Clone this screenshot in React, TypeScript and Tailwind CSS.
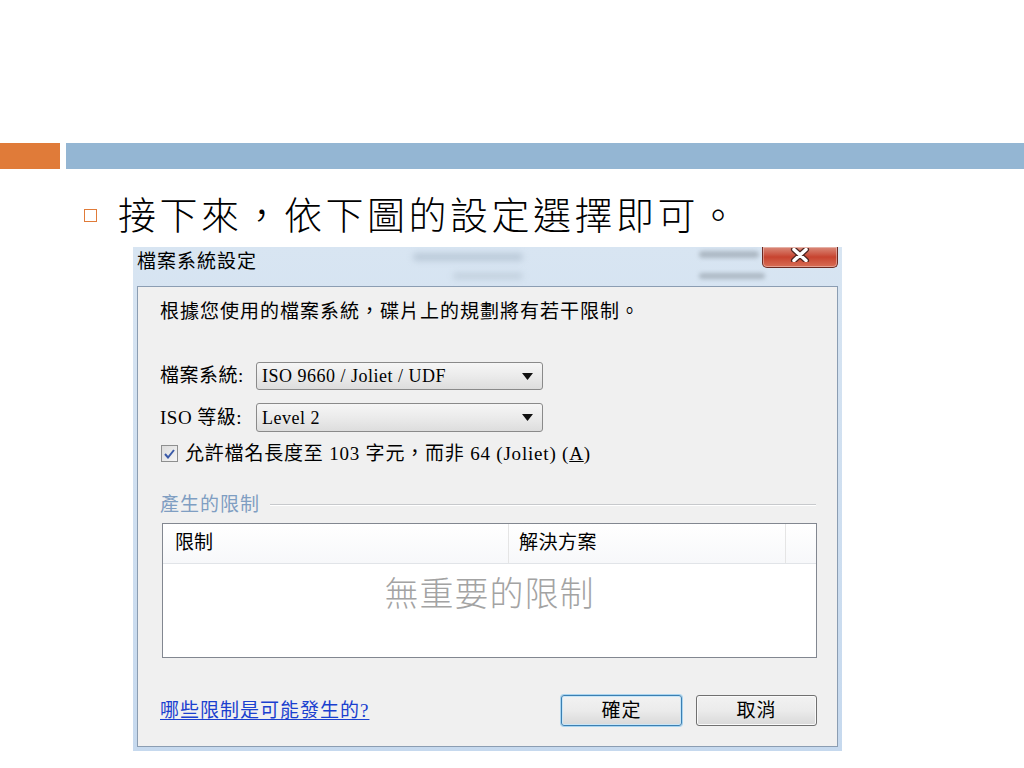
import React from "react";

const dlgFont = "font-['Liberation_Serif','Noto_Sans_CJK_TC',serif]";

function DropDown({ value }: { value: string }) {
  return (
    <div className="flex items-center justify-between w-[287px] h-full px-[5px] border border-[#8a8a8a] rounded-[3px] bg-gradient-to-b from-[#f6f6f6] via-[#ebebeb] to-[#dddddd]">
      <span className="text-[18px] leading-[22px] tracking-[0.5px] text-black">{value}</span>
      <svg width="11" height="7" viewBox="0 0 11 7" className="mr-[4px]">
        <path d="M0 0 L11 0 L5.5 7 Z" fill="#111" />
      </svg>
    </div>
  );
}

function CloseButton() {
  return (
    <div className="flex items-center justify-center w-[76px] h-[21px] mr-[4px] rounded-b-[5px] border border-t-0 border-[#6b2a22] bg-gradient-to-b from-[#d9897a] via-[#c7432f] to-[#d86d55] shadow-[inset_0_0_0_1px_rgba(255,255,255,0.35)]">
      <svg width="20" height="14" viewBox="0 0 20 14" className="-mt-[4px]">
        <path d="M4 1.5 L16 12.5 M16 1.5 L4 12.5" stroke="#4f2520" strokeWidth="6" strokeLinecap="round" />
        <path d="M4 1.5 L16 12.5 M16 1.5 L4 12.5" stroke="#ffffff" strokeWidth="3.5" strokeLinecap="round" />
      </svg>
    </div>
  );
}

function DialogButton({ label, focused }: { label: string; focused?: boolean }) {
  return (
    <div
      className={
        focused
          ? "flex items-center justify-center w-[121px] h-[31px] rounded-[3px] border border-[#3c7fb1] shadow-[0_0_0_1px_#a8d4f0,inset_0_0_0_1px_#c8e6f8] bg-gradient-to-b from-[#f2f2f2] via-[#ebebeb] to-[#d9d9d9]"
          : "flex items-center justify-center w-[121px] h-[31px] rounded-[3px] border border-[#707070] shadow-[inset_0_0_0_1px_#fafafa] bg-gradient-to-b from-[#f2f2f2] via-[#ebebeb] to-[#d9d9d9]"
      }
    >
      <span className="text-[19px] leading-[22px] tracking-[1px] text-black">{label}</span>
    </div>
  );
}

export default function App() {
  return (
    <div className="relative w-[1024px] h-[768px] overflow-hidden bg-white">
      <div className="h-[143px]" />
      <div className="flex h-[26px] gap-[6px]">
        <div className="w-[60px] bg-[#e07b39]" />
        <div className="flex-1 bg-[#94b6d3]" />
      </div>

      <div className="flex items-center h-[48px] mt-[20px] pl-[84px]">
        <div className="w-[13px] h-[13px] border border-[#e07b39] mt-[4px]" />
        <span className="ml-[21px] text-[38px] leading-[48px] tracking-[3.5px] text-black font-light font-['Noto_Sans_CJK_TC',serif]">
          接下來，依下圖的設定選擇即可。
        </span>
      </div>

      <div
        className={`relative flex flex-col ml-[133px] mt-[10px] w-[709px] h-[504px] bg-gradient-to-b from-[#d8e5f2] to-[#c6d9ee] ${dlgFont}`}
      >
        {/* title bar */}
        <div className="relative flex items-start justify-between h-[39px] pl-[4px] pt-[4px] overflow-hidden">
          <div className="absolute left-[280px] top-[6px] w-[110px] h-[8px] rounded-full bg-[#9fb0c0] opacity-50 blur-[3px]" />
          <div className="absolute left-[320px] top-[26px] w-[70px] h-[6px] rounded-full bg-[#a9b8c6] opacity-50 blur-[3px]" />
          <div className="absolute left-[566px] top-[4px] w-[60px] h-[7px] rounded-full bg-[#8f9aa4] opacity-60 blur-[2px]" />
          <div className="absolute left-[566px] top-[26px] w-[66px] h-[6px] rounded-full bg-[#8f9aa4] opacity-60 blur-[2px]" />
          <span className="relative text-[19px] leading-[22px] tracking-[1px] text-black">檔案系統設定</span>
          <div className="relative -mt-[4px]">
            <CloseButton />
          </div>
        </div>

        {/* client area */}
        <div className="flex flex-col flex-1 mx-[4px] mb-[4px] pl-[22px] pr-[20px] border border-[#8b9db2] bg-[#f0f0f0] text-[19px] text-black">
          <div className="mt-[13px] leading-[24px] tracking-[1px]">根據您使用的檔案系統，碟片上的規劃將有若干限制。</div>

          <div className="flex items-center h-[28px] mt-[38px]">
            <span className="w-[96px] leading-[22px] tracking-[0.5px]">檔案系統:</span>
            <DropDown value="ISO 9660 / Joliet / UDF" />
          </div>

          <div className="flex items-center h-[29px] mt-[13px]">
            <span className="w-[96px] leading-[22px] tracking-[0.5px]">ISO 等級:</span>
            <DropDown value="Level 2" />
          </div>

          <div className="flex items-center h-[23px] mt-[10px]">
            <div className="flex items-center justify-center w-[17px] h-[17px] ml-[1px] border border-[#8e8f8f] bg-gradient-to-br from-[#dcdcdc] to-[#f6f6f6]">
              <svg width="11" height="10" viewBox="0 0 11 10">
                <path d="M1 5 L4 8.5 L10 1" stroke="#3a5aa8" strokeWidth="2" fill="none" />
              </svg>
            </div>
            <span className="ml-[7px] leading-[22px] text-[19px] tracking-[0.8px]">
              允許檔名長度至 103 字元，而非 64 (Joliet) (<span className="underline">A</span>)
            </span>
          </div>

          <div className="flex items-center h-[24px] mt-[28px]">
            <span className="leading-[24px] tracking-[1px] text-[#7f9ec2]">產生的限制</span>
            <div className="flex-1 ml-[10px] mr-[1px] h-[2px] border-t border-[#c7c9cc] border-b-white border-b" />
          </div>

          <div className="flex flex-col ml-[2px] mt-[6px] h-[135px] border border-[#828790] bg-white">
            <div className="flex h-[40px] border-b border-[#e1e4e8] bg-gradient-to-b from-white to-[#f7f8fa]">
              <div className="flex items-center w-[346px] pl-[12px] border-r border-[#e5e5e5]">限制</div>
              <div className="flex items-center w-[277px] pl-[10px] border-r border-[#e5e5e5] tracking-[0.5px]">解決方案</div>
              <div className="flex-1" />
            </div>
            <div className="flex justify-center pt-[10px]">
              <span className="text-[34px] leading-[36px] tracking-[1px] text-[#a3a3a3] font-['Noto_Sans_CJK_TC',sans-serif] font-light">
                無重要的限制
              </span>
            </div>
          </div>

          <div className="flex items-center justify-between mt-[37px]">
            <span className="leading-[24px] tracking-[1px] text-[#1a3fcf] underline underline-offset-2">哪些限制是可能發生的?</span>
            <div className="flex gap-[14px]">
              <DialogButton label="確定" focused />
              <DialogButton label="取消" />
            </div>
          </div>
        </div>
      </div>
    </div>
  );
}
